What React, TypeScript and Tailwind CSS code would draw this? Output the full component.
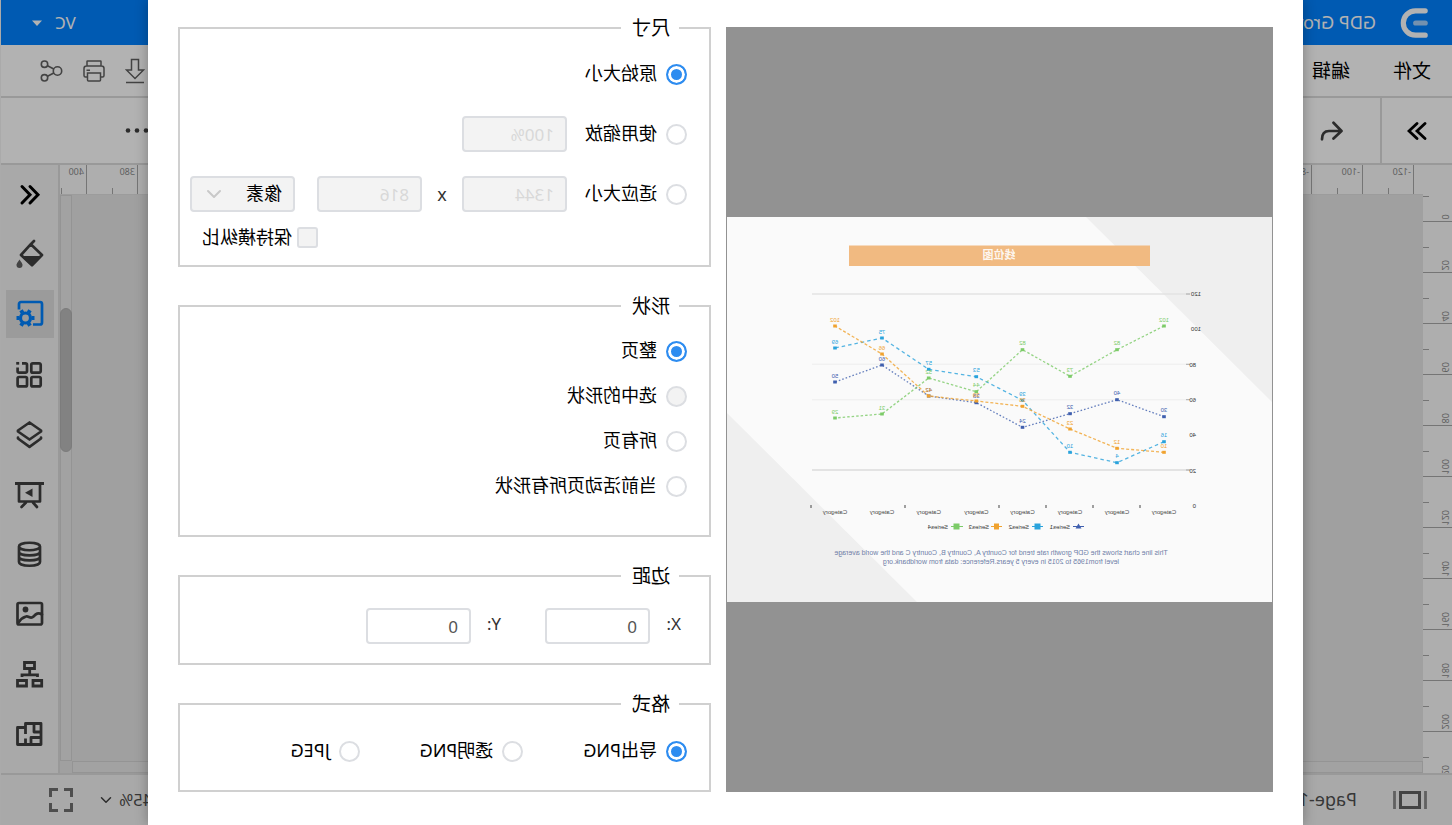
import React from "react";
import { ChevronDown } from "lucide-react";

const RADIO =
  "m-0 size-[21px] shrink-0 appearance-none rounded-full border-2 border-[#dcdee2] bg-white checked:border-[#2d8cf0] checked:bg-[#2d8cf0] checked:shadow-[inset_0_0_0_3px_#fff] disabled:bg-[#f3f3f3]";
const FIELD =
  "h-9 w-[105px] rounded border-2 border-[#dcdee2] bg-white px-[11px] text-[17px] leading-8 text-[#555] disabled:bg-[#f3f3f3] disabled:text-[#d8d8d8]";

type RadioProps = { name: string; label: string; checked?: boolean; disabled?: boolean };

function Radio({ name, label, checked, disabled }: RadioProps) {
  return (
    <label className="flex items-center gap-[9px] text-lg leading-6 whitespace-nowrap">
      <input type="radio" name={name} defaultChecked={checked} disabled={disabled} className={RADIO} />
      <span className="-mt-0.5">{label}</span>
    </label>
  );
}

function Group({ title, children }: { title: string; children: React.ReactNode }) {
  return (
    <fieldset className="min-w-0 border-2 border-[#d0d0d0]">
      <legend className="ml-[30px] pr-[11px] pl-[9px] text-[19px] leading-7">{title}</legend>
      {children}
    </fieldset>
  );
}

const XS = [108, 155, 202, 249.5, 295.7, 343.3, 390, 437];
const SERIES = [
  { color: "#3f5fae", dash: "1.6 2", ys: [199.7, 182.7, 196.7, 210.3, 185.7, 179, 148, 165], labels: ["30", "40", "32", "24", "38", "42", "60", "50"] },
  { color: "#2aa3dc", dash: "3.5 3", ys: [224.7, 245.7, 235.3, 183.3, 159.7, 152.3, 121, 131], labels: ["16", "4", "10", "39", "53", "57", "75", "69"] },
  { color: "#f0a22e", dash: "3 2", ys: [235.3, 231.3, 212, 189.3, 184, 179, 137, 109], labels: ["10", "12", "23", "36", "39", "42", "66", "102"] },
  { color: "#7ccb68", dash: "2.5 2", ys: [109, 132.7, 159.3, 132.7, 174.7, 161, 197, 201], labels: ["102", "82", "73", "82", "44", "52", "31", "29"] },
];

function Chart() {
  return (
    <svg viewBox="0 0 545 385" className="block w-full" fontFamily='"Liberation Sans","Noto Sans CJK SC",sans-serif'>
      <rect width="545" height="385" fill="#fafafa" />
      <path d="M0 0H186L0 185Z M545 196V385H355Z" fill="#efefef" />
      <rect x="122" y="28.5" width="301" height="20.5" fill="#f1ba81" />
      <text x="273" y="42" fontSize="11" fontWeight="700" fill="#fff" fillOpacity="0.9" textAnchor="middle">线位图</text>
      <g stroke="#e3e3e3" strokeWidth="1.5">
        <path d="M82 77H460" />
        <path d="M82 147.3H460M82 182.7H460" stroke="#f1f1f1" />
        <path d="M82 253H460" strokeWidth="2" />
      </g>
      <path d="M82 77h4M82 147.3h4M82 182.7h4M82 253h4" stroke="#999" strokeWidth="0.8" />
      {["120", "100", "80", "60", "40", "20", "0"].map((t, i) => (
        <text key={t} x={i < 2 ? 71 : 76} y={79 + i * 35.3} fontSize="6" fill="#333">{t}</text>
      ))}
      {XS.map((x) => (
        <text key={x} x={x} y="297" fontSize="6" fill="#444" textAnchor="middle">Category</text>
      ))}
      <path d="M132 288v3M179 288v3M226 288v3M273 288v3M367 288v3M461 288v3" stroke="#444" strokeWidth="1" />
      {SERIES.map((s) => (
        <g key={s.color}>
          <polyline points={s.ys.map((y, i) => `${XS[i]},${y}`).join(" ")} fill="none" stroke={s.color} strokeOpacity="0.8" strokeWidth="1.3" strokeDasharray={s.dash} />
          {s.ys.map((y, i) => (
            <g key={i} fill={s.color}>
              <rect x={XS[i] - 1.8} y={y - 1.5} width="3.6" height="3" />
              <text x={XS[i]} y={y - 4.5} fontSize="6" textAnchor="middle">{s.labels[i]}</text>
            </g>
          ))}
        </g>
      ))}
      <path d="M188 309.5h11" stroke="#3f5fae" />
      <path d="M193.5 306.5l3 5h-6z" fill="#3f5fae" />
      <path d="M229 309.5h11" stroke="#2aa3dc" />
      <rect x="231.5" y="306.5" width="6" height="6" fill="#2aa3dc" />
      <path d="M270 309.5h11" stroke="#f0a22e" />
      <rect x="273" y="306.5" width="5" height="6" fill="#f0a22e" />
      <path d="M309 309.5h12" stroke="#7ccb68" />
      <rect x="312.5" y="306.5" width="6" height="6" fill="#7ccb68" />
      {[202, 243, 283, 324].map((x, i) => (
        <text key={x} x={x} y="312" fontSize="6" fill="#333">{`Series${i + 1}`}</text>
      ))}
      <g fontSize="7" fill="#6f80a8" textAnchor="middle">
        <text x="271" y="338">This line chart shows the GDP growth rate trend for Country A, Country B, Country C and the world average</text>
        <text x="271" y="347">level from1965 to 2015 in every 5 years.Reference: data from worldbank.org</text>
      </g>
    </svg>
  );
}

function TopRuler() {
  return (
    <svg width="1363" height="29" className="block shrink-0" fontFamily='"Noto Sans",sans-serif' shapeRendering="crispEdges">
      {Array.from({ length: 27 }, (_, i) => {
        const x = Math.round(9 + i * 51.04) + 0.5;
        return (
          <g key={i}>
            <path d={`M${x} 0V29M${x + 25} 23V29`} stroke="#a8a8a8" />
            <text x={x + 2.5} y="10" fontSize="9" fill="#8a8a8a">{-120 + i * 20}</text>
          </g>
        );
      })}
    </svg>
  );
}

function SideRuler() {
  return (
    <svg width="29" height="580" className="block shrink-0" fontFamily='"Noto Sans",sans-serif' shapeRendering="crispEdges">
      <path d="M23 2.5H29" stroke="#a8a8a8" />
      {Array.from({ length: 12 }, (_, i) => {
        const y = Math.round(28 + i * 51.03) - 0.5;
        return (
          <g key={i}>
            <path d={`M0 ${y}H29M23 ${y + 26}H29`} stroke="#a8a8a8" />
            <text transform={`translate(10 ${y - 2}) rotate(-90)`} fontSize="9" fill="#8a8a8a">{i * 20}</text>
          </g>
        );
      })}
    </svg>
  );
}

const D = "#404040";
const SIDE_ICONS: { name: string; art: React.ReactNode }[] = [
  { name: "收起", art: <path d="M14 6.5L6 14.7L14 23M22 6.5L14 14.7L22 23" stroke="#000" strokeWidth="3" strokeLinejoin="miter" /> },
  {
    name: "填充",
    art: (
      <>
        <path d="M10 1L13.2 4.2M13.2 4.2L2 15L12 25.2L23 15Z" strokeWidth="2.7" />
        <path d="M2 16H23L12 26Z" fill={D} stroke="none" />
        <path d="M24.5 19.5c2.5 3.5 3 4.5 3 5.5a3 3 0 0 1-6 0c0-1 .5-2 3-5.5Z" fill="#606060" stroke="none" />
      </>
    ),
  },
  {
    name: "页面设置",
    art: (
      <g stroke="#0082ff">
        <path d="M25 9.5V4a2 2 0 0 0-2-2H4a2 2 0 0 0-2 2V22.5a2 2 0 0 0 2 2H11" strokeWidth="2.7" strokeLinecap="butt" />
        <circle cx="18.5" cy="18" r="5" strokeWidth="3.2" />
        <path d="M24.5 18h3M12.5 18h-3M21.5 12.8L23 10.2M15.5 12.8L14 10.2M21.5 23.2L23 25.8M15.5 23.2L14 25.8" strokeWidth="3.8" strokeLinecap="butt" />
      </g>
    ),
  },
  {
    name: "符号",
    art: (
      <>
        <rect x="3.3" y="3.3" width="9.4" height="9.4" rx="1.5" />
        <rect x="3.3" y="17" width="9.4" height="9.4" rx="1.5" />
        <rect x="17" y="17" width="9.4" height="9.4" rx="1.5" />
        <path d="M22 3.3H18.5A1.5 1.5 0 0 0 17 4.8V11.2A1.5 1.5 0 0 0 18.5 12.7H25A1.5 1.5 0 0 0 26.4 11.2V7.5" strokeLinecap="butt" />
        <path d="M24.8 3.3h3" strokeLinecap="butt" />
      </>
    ),
  },
  { name: "图层", art: <path d="M14.5 2.5L26 10.5Q26.3 11 26 11.5L14.5 19.5L3 11.5Q2.7 11 3 10.5ZM26 17.5V18.5L14.5 26.8L3 18.5V17.5" /> },
  {
    name: "演示",
    art: (
      <>
        <path d="M0 3.5H29" strokeWidth="3" strokeLinecap="butt" />
        <path d="M4 4V21.5H25V4M11 22.5L7 27M18 22.5L22.5 27" />
        <path d="M11.5 8.5L19 12.7L11.5 17Z" fill={D} stroke="none" />
      </>
    ),
  },
  { name: "数据", art: <path d="M4 6.5c0-5 21-5 21 0s-21 5-21 0V22c0 5 21 5 21 0V6.5M4 12c0 4.5 21 4.5 21 0M4 17c0 4.5 21 4.5 21 0" /> },
  {
    name: "图片",
    art: (
      <>
        <rect x="2" y="3" width="24.5" height="21.5" rx="1.5" />
        <circle cx="18.5" cy="9.5" r="2.9" fill={D} stroke="none" />
        <path d="M2 14.5C6 12 8 14 10.5 16.5C13.5 19.5 15.500 15.500 18 16.5C21 17.5 23.500 19 25.500 22.5" />
      </>
    ),
  },
  {
    name: "组织图",
    art: <path d="M9.5 2.5H19.5V8.5H9.5ZM2.3 20.5H11V26H2.3ZM17.5 20.5H26.5V26H17.5ZM14.3 9V15M6.5 17V14.8H22V17" strokeWidth="2.8" strokeLinejoin="miter" strokeLinecap="butt" />,
  },
  {
    name: "平面图",
    art: <path d="M3 3.5H18.5V7.5H26.5V24.5H3ZM3 12H10V4M18.5 7.5V14M10 12V10M3 17.5H13V24M18.5 24V18.5" strokeWidth="2.8" strokeLinecap="butt" />,
  },
];

function Workspace() {
  return (
    <div className="flex h-screen flex-col border-r border-[#f4f4f4] bg-white">
      <header className="flex h-[45px] shrink-0 items-center bg-[#0082ff] pr-[31px] pl-6 text-white">
        <svg width="28" height="32" viewBox="0 0 28 32" fill="none" strokeLinecap="round" className="mr-6 shrink-0" aria-hidden="true">
          <path d="M2.8 3.8H12.5A12.2 12.2 0 0 1 12.5 28.2H2.8" stroke="#fff" strokeWidth="5.2" />
          <path d="M2.8 16H12.3" stroke="#a5d0fb" strokeWidth="5.2" />
        </svg>
        <span className="-mt-0.5 text-lg leading-6">GDP Growth</span>
        <button className="ml-auto flex items-center gap-[13px] text-[17px] leading-6">
          VC
          <svg width="10" height="6" viewBox="0 0 10 6" aria-hidden="true"><path d="M0 .5H10L5 6Z" fill="#fff" /></svg>
        </button>
      </header>
      <nav className="flex h-[53px] shrink-0 items-center border-b-2 border-[#dcdcdc] pr-[39px] pl-[21px] text-[19px] leading-7 text-black">
        <button className="mr-[43px]">文件</button>
        <button>编辑</button>
        <div className="ml-auto flex items-center gap-5 text-[#606060]">
          <button aria-label="下载">
            <svg width="20" height="26" viewBox="0 0 20 26" fill="none" stroke="currentColor" strokeWidth="1.5">
              <path d="M6.5 1.5H13.5V12H18.5L10 20.5L1.5 12H6.5ZM1 24.5H19" />
            </svg>
          </button>
          <button aria-label="打印">
            <svg width="22" height="22" viewBox="0 0 22 22" fill="none" stroke="currentColor" strokeWidth="1.5">
              <path d="M4 6V1.5Q4 1 4.5 1H17.5Q18 1 18 1.5V6M4 17H2.5Q1 17 1 15.5V8.5Q1 6 3.5 6H18.5Q21 6 21 8.5V15.5Q21 17 19.5 17H18M4.5 13H17.5V20Q17.5 21 16.5 21H5.5Q4.5 21 4.5 20ZM15 10.2H18.5" />
            </svg>
          </button>
          <button aria-label="分享">
            <svg width="23" height="22" viewBox="0 0 23 22" fill="none" stroke="currentColor" strokeWidth="1.6">
              <circle cx="5.5" cy="11" r="4.2" />
              <circle cx="18.5" cy="4.2" r="3.2" />
              <circle cx="18.5" cy="17.8" r="3.2" />
              <path d="M9.2 9L15.5 5.7M9.2 13L15.5 16.3" />
            </svg>
          </button>
        </div>
      </nav>
      <div className="flex h-[67px] shrink-0 items-center border-b-2 border-[#dcdcdc]">
        <button aria-label="展开" className="flex h-full w-[72px] items-center justify-center border-r-2 border-[#dcdcdc]">
          <svg width="20" height="20" viewBox="0 0 20 20" fill="none" stroke="#000" strokeWidth="2.8" strokeLinecap="round">
            <path d="M2 2.5L10 10L2 17.5M10 2.5L18 10L10 17.5" />
          </svg>
        </button>
        <button aria-label="撤销" className="ml-9">
          <svg width="24" height="20" viewBox="0 0 24 20" fill="none" stroke={D} strokeWidth="2.7" strokeLinecap="round" strokeLinejoin="round">
            <path d="M10.5 1.8L2.5 10L10.5 17.5M3 10H15Q22 10 22 18.3" />
          </svg>
        </button>
        <button aria-label="更多" className="mr-[124px] ml-auto">
          <svg width="24" height="6" viewBox="0 0 24 6" fill={D}>
            <circle cx="3" cy="2.5" r="2.3" />
            <circle cx="12" cy="2.5" r="2.3" />
            <circle cx="21" cy="2.5" r="2.3" />
          </svg>
        </button>
      </div>
      <div className="flex min-h-0 flex-1">
        <div className="flex w-[29px] shrink-0 flex-col overflow-hidden bg-[#fafafa] pt-[29px]">
          <SideRuler />
        </div>
        <div className="flex min-w-0 flex-1 flex-col bg-[#e5e5e5]">
          <div className="h-[30px] shrink-0 overflow-hidden border-b border-[#e0e0e0] bg-[#fafafa]">
            <TopRuler />
          </div>
          <div className="flex min-h-0 flex-1 justify-end">
            <div className="w-3 border border-[#d4d4d4] bg-[#e8e8e8] pt-[112px]">
              <div className="-mx-px h-36 rounded-full border border-[#b2b2b2] bg-[#bababa]" />
            </div>
          </div>
          <div className="mr-3 h-3 shrink-0 border border-[#d4d4d4] bg-[#e8e8e8]" />
        </div>
        <aside className="flex w-[59px] shrink-0 flex-col items-center gap-3 overflow-hidden border-l-2 border-[#dcdcdc] bg-[#f3f3f3] pt-[5px] pr-0.5">
          {SIDE_ICONS.map((item, i) => (
            <button key={item.name} aria-label={item.name} className={i === 2 ? "flex size-12 shrink-0 items-center justify-center bg-[#dedede]" : "flex size-12 shrink-0 items-center justify-center"}>
              <svg width="29" height="29" viewBox="-1 0 29 29" fill="none" stroke={D} strokeWidth="2.7" strokeLinecap="round" strokeLinejoin="round" className="overflow-visible">
                {item.art}
              </svg>
            </button>
          ))}
        </aside>
      </div>
      <footer className="flex h-[52px] shrink-0 items-center border-t-2 border-[#dcdcdc] bg-[#f3f3f3] pr-12 pl-[25px] text-lg leading-6 text-[#505050]">
        <svg width="34" height="18" viewBox="0 0 34 18" fill="none" aria-hidden="true" className="mr-9">
          <path d="M1.5 0V18M32.5 0V18" stroke="#8a8a8a" strokeWidth="2.8" />
          <rect x="7.5" y="1.5" width="19" height="15" stroke="#606060" strokeWidth="3" />
        </svg>
        <span className="-mt-0.5">Page-1</span>
        <span className="ml-auto text-[17px]">45%</span>
        <ChevronDown size={18} strokeWidth={2} className="mr-6 ml-1 text-[#404040]" />
        <button aria-label="全屏">
          <svg width="24" height="24" viewBox="0 0 24 24" fill="none" stroke="#707070" strokeWidth="3">
            <path d="M1.5 9V1.5H9M15 1.5H22.5V9M22.5 15V22.5H15M9 22.5H1.5V15" />
          </svg>
        </button>
      </footer>
    </div>
  );
}

function ExportDialog() {
  return (
    <section role="dialog" aria-label="导出" className="flex min-h-screen flex-1 gap-[15px] bg-white px-[30px] text-black shadow-[0_0_12px_rgba(0,0,0,0.3)]">
      <div className="mt-[27px] mb-[33px] flex min-w-0 flex-1 items-center bg-[#929292] px-px">
        <Chart />
      </div>
      <form className="flex w-[533px] shrink-0 flex-col gap-[25px] pt-[14px] pb-[33px]">
        <Group title="尺寸">
          <div className="flex flex-col pt-5 pb-4 pl-[22px]">
            <div className="flex h-6 items-center">
              <Radio name="size" label="原始大小" checked />
            </div>
            <div className="mt-[30px] flex items-center gap-[18px]">
              <Radio name="size" label="使用缩放" />
              <input aria-label="缩放" disabled defaultValue="100%" className={FIELD} />
            </div>
            <div className="mt-6 flex items-center">
              <Radio name="size" label="适应大小" />
              <input aria-label="宽度" disabled defaultValue="1344" className={`${FIELD} ml-[18px]`} />
              <span className="w-10 text-center text-lg leading-6 text-[#333]">x</span>
              <input aria-label="高度" disabled defaultValue="816" className={FIELD} />
              <div className="relative ml-[22px]">
                <select aria-label="单位" disabled className="h-9 w-[105px] appearance-none rounded border-2 border-[#dcdee2] bg-[#f3f3f3] pb-0.5 pl-[11px] text-lg leading-[30px] text-black opacity-100">
                  <option>像素</option>
                </select>
                <ChevronDown size={24} strokeWidth={2} className="pointer-events-none absolute top-1.5 right-3 text-[#c8c8c8]" />
              </div>
            </div>
            <label className="mt-[13px] ml-[369px] flex items-center gap-[5px] text-lg leading-6 whitespace-nowrap">
              <input type="checkbox" disabled className="m-0 size-[21px] shrink-0 appearance-none rounded-[3px] border-2 border-[#dcdee2] bg-[#f3f3f3]" />
              保持横纵比
            </label>
          </div>
        </Group>
        <Group title="形状">
          <div className="flex flex-col gap-[23px] pt-5 pb-[38px] pl-[22px]">
            <Radio name="shape" label="整页" checked />
            <Radio name="shape" label="选中的形状" disabled />
            <Radio name="shape" label="所有页" />
            <Radio name="shape" label="当前活动页所有形状" />
          </div>
        </Group>
        <Group title="边距">
          <div className="flex items-center gap-11 pt-[18px] pb-[19px] pl-7 text-[17px] leading-6">
            <label className="flex items-center text-[#333]">
              <span className="-mt-1 w-[31px]">X:</span>
              <input defaultValue="0" className={FIELD} />
            </label>
            <label className="flex items-center text-[#333]">
              <span className="-mt-1 w-[30px]">Y:</span>
              <input defaultValue="0" className={FIELD} />
            </label>
          </div>
        </Group>
        <Group title="格式">
          <div className="flex items-center gap-[60px] pt-[22px] pb-7 pl-[22px]">
            <Radio name="format" label="导出PNG" checked />
            <Radio name="format" label="透明PNG" />
            <Radio name="format" label="JPEG" />
          </div>
        </Group>
      </form>
    </section>
  );
}

export default function App() {
  return (
    <div className='relative min-h-screen -scale-x-100 overflow-hidden font-["Noto_Sans","Noto_Sans_CJK_SC",sans-serif]'>
      <Workspace />
      <div className="absolute inset-0 flex bg-black/30 pr-[148px] pl-[149px]">
        <ExportDialog />
      </div>
    </div>
  );
}
